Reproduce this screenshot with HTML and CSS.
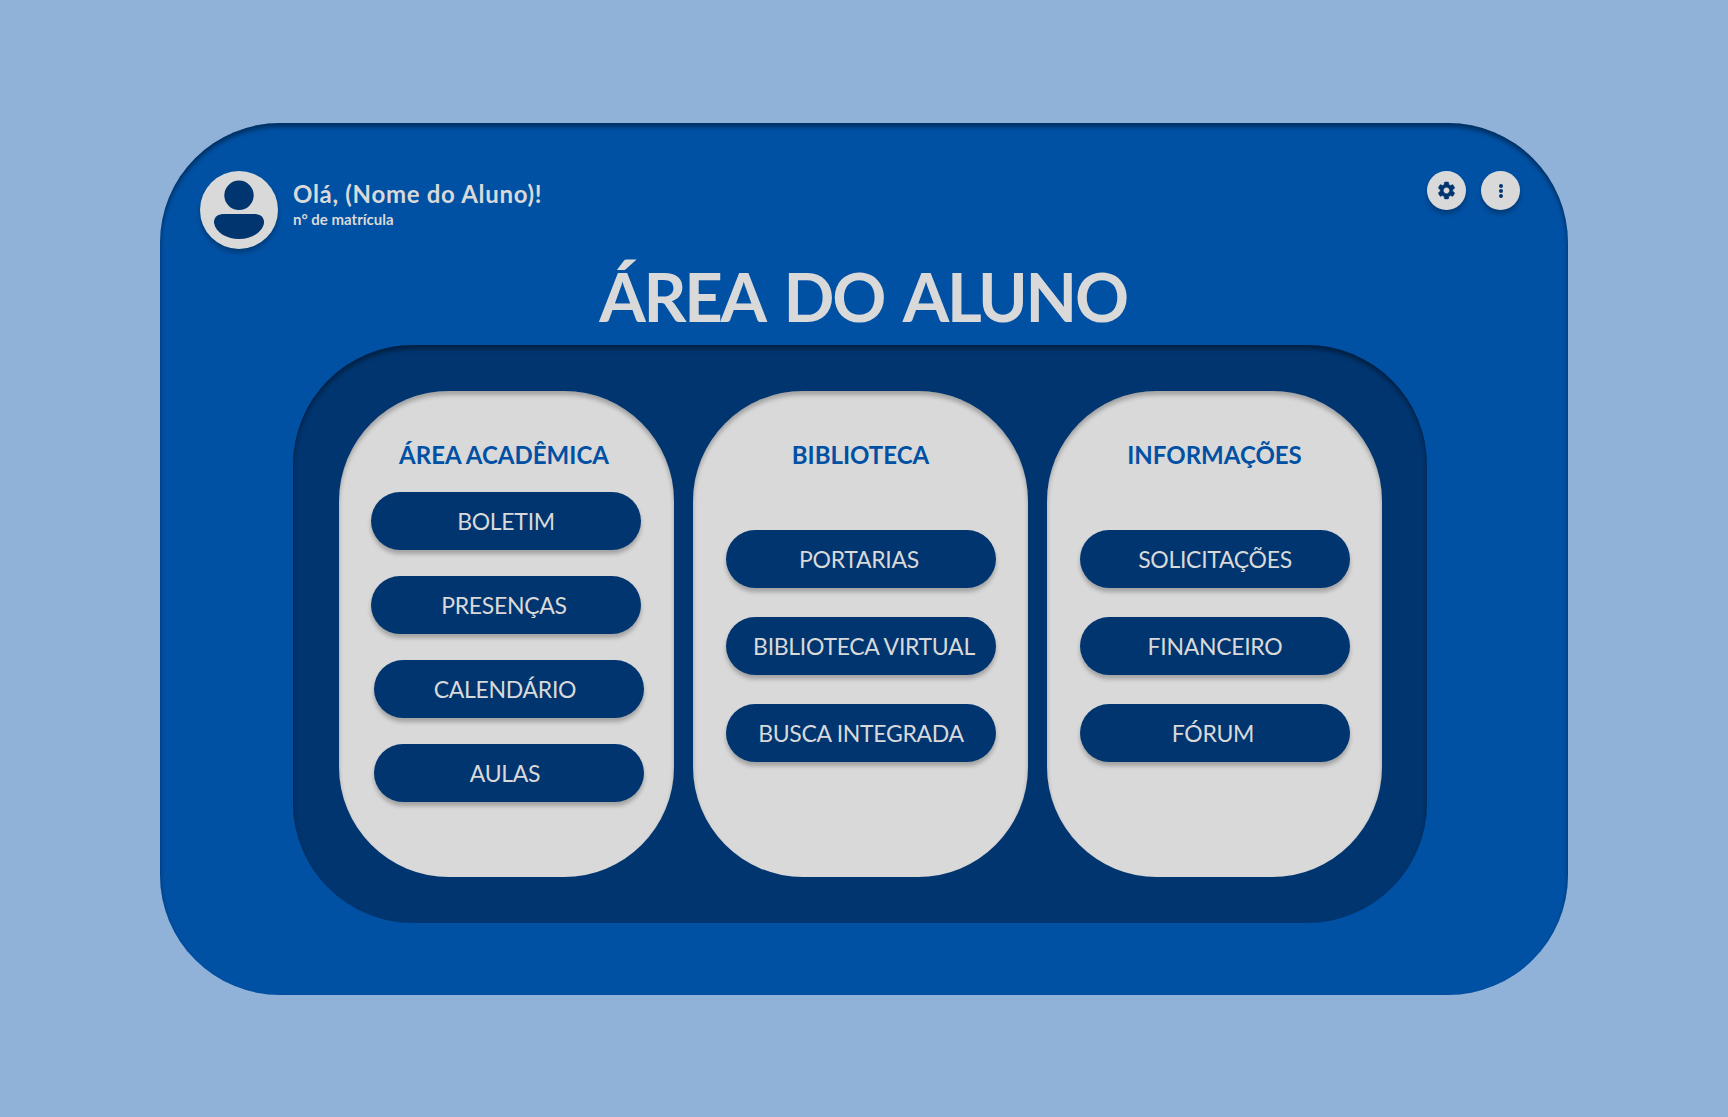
FILE: index.html
```html
<!DOCTYPE html>
<html lang="pt-BR">
<head>
    <meta charset="UTF-8">
    <meta name="viewport" content="width=device-width, initial-scale=1.0">
    <title>Área do Aluno</title>
    <link rel="stylesheet" href="styles.css">
</head>
<body>
    <main class="panel">
        <header class="top-bar">
            <div class="user">
                <svg class="avatar" viewBox="0 0 78 78" aria-hidden="true">
                    <circle cx="39" cy="24.3" r="14.7" fill="#00356f"/>
                    <path d="M23 43h32c5.500 0 9.500 4 9 9-1.500 9-12 16-25 16s-23.500-7-25-16c-.5-5 3.500-9 9-9z" fill="#00356f"/>
                </svg>
                <div class="user-text">
                    <p class="user-name">Olá, (Nome do Aluno)!</p>
                    <p class="user-id">n° de matrícula</p>
                </div>
            </div>
            <div class="actions">
                <button class="round-button" type="button" aria-label="Configurações">
                    <svg class="gear" viewBox="0 0 24 24" aria-hidden="true">
                        <path d="M19.14 12.94c.04-.3.06-.61.06-.94 0-.32-.02-.64-.07-.94l2.03-1.58c.18-.14.23-.41.12-.61l-1.92-3.32c-.12-.22-.37-.29-.59-.22l-2.39.96c-.5-.38-1.03-.7-1.62-.94l-.36-2.54c-.04-.24-.24-.41-.48-.41h-3.84c-.24 0-.43.17-.47.41l-.36 2.54c-.59.24-1.13.57-1.62.94l-2.39-.96c-.22-.08-.47 0-.59.22L2.74 8.87c-.12.21-.08.47.12.61l2.03 1.58c-.05.3-.09.63-.09.94s.02.64.07.94l-2.03 1.58c-.18.14-.23.41-.12.61l1.92 3.32c.12.22.37.29.59.22l2.39-.96c.5.38 1.03.7 1.62.94l.36 2.54c.05.24.24.41.48.41h3.84c.24 0 .44-.17.47-.41l.36-2.54c.59-.24 1.13-.56 1.62-.94l2.39.96c.22.08.47 0 .59-.22l1.92-3.32c.12-.22.07-.47-.12-.61l-2.01-1.58zM12 15.6c-1.98 0-3.6-1.62-3.6-3.6s1.62-3.6 3.6-3.6 3.6 1.62 3.6 3.6-1.62 3.6-3.6 3.6z"/>
                    </svg>
                </button>
                <button class="round-button" type="button" aria-label="Mais opções">
                    <span class="dots"><i></i><i></i><i></i></span>
                </button>
            </div>
        </header>

        <h1 class="page-title">ÁREA DO ALUNO</h1>

        <section class="board">
            <div class="column">
                <h2 class="column-title shift-title">ÁREA ACADÊMICA</h2>
                <div class="menu menu-first">
                    <button class="menu-button" type="button">BOLETIM</button>
                    <button class="menu-button text-left-2" type="button">PRESENÇAS</button>
                    <button class="menu-button menu-button-right text-left-4" type="button">CALENDÁRIO</button>
                    <button class="menu-button menu-button-right text-left-4" type="button">AULAS</button>
                </div>
            </div>
            <div class="column">
                <h2 class="column-title">BIBLIOTECA</h2>
                <div class="menu">
                    <button class="menu-button text-left-2" type="button">PORTARIAS</button>
                    <button class="menu-button text-right-3" type="button">BIBLIOTECA VIRTUAL</button>
                    <button class="menu-button" type="button">BUSCA INTEGRADA</button>
                </div>
            </div>
            <div class="column">
                <h2 class="column-title">INFORMAÇÕES</h2>
                <div class="menu">
                    <button class="menu-button" type="button">SOLICITAÇÕES</button>
                    <button class="menu-button" type="button">FINANCEIRO</button>
                    <button class="menu-button text-left-2" type="button">FÓRUM</button>
                </div>
            </div>
        </section>
    </main>
</body>
</html>
```

FILE: styles.css
```css
* {
    box-sizing: border-box;
}

body {
    margin: 0;
    height: 100vh;
    padding-top: 1px;
    display: flex;
    align-items: center;
    justify-content: center;
    background-color: #90b2d9;
    font-family: Lato, "Open Sans", sans-serif;
    color: #d9d9d9;
}

p,
h1,
h2 {
    margin: 0;
}

.panel {
    width: 1408px;
    height: 872px;
    padding: 48px 48px 0 40px;
    background-color: #0050a3;
    border-radius: 120px;
    box-shadow: inset 0 4px 4px rgba(0, 0, 0, 0.4);
}

.top-bar {
    display: flex;
    justify-content: space-between;
    align-items: flex-start;
    height: 78px;
}

.user {
    display: flex;
    gap: 15px;
}

.avatar {
    width: 78px;
    height: 78px;
    background-color: #d9d9d9;
    border-radius: 50%;
    box-shadow: 0 4px 4px rgba(0, 0, 0, 0.25);
}

.user-text {
    padding-top: 8px;
}

.user-name {
    font-size: 24px;
    font-weight: 700;
    line-height: 30px;
    letter-spacing: 0.7px;
}

.user-id {
    font-size: 15px;
    font-weight: 700;
    line-height: 20px;
}

.actions {
    display: flex;
    gap: 15px;
}

.round-button {
    width: 39px;
    height: 39px;
    padding: 0;
    display: flex;
    align-items: center;
    justify-content: center;
    background-color: #d9d9d9;
    border: none;
    border-radius: 50%;
    box-shadow: 0 4px 4px rgba(0, 0, 0, 0.25);
}

.gear {
    width: 21px;
    height: 21px;
    fill: #00356f;
    stroke: #00356f;
    stroke-width: 0.6;
}

.dots {
    display: flex;
    flex-direction: column;
    gap: 1px;
}

.dots i {
    width: 4px;
    height: 4px;
    background-color: #00356f;
    border-radius: 50%;
}

.page-title {
    height: 96px;
    padding-left: 6px;
    font-size: 67px;
    font-weight: 700;
    line-height: 94px;
    letter-spacing: -2.3px;
    word-spacing: 7px;
    text-align: center;
}

.board {
    display: grid;
    grid-template-columns: repeat(3, 335px);
    gap: 19px;
    width: 1134px;
    height: 578px;
    margin: 0 auto;
    padding: 46px 45px 46px 46px;
    background-color: #00356f;
    border-radius: 120px;
    box-shadow: inset 0 4px 4px rgba(0, 0, 0, 0.4);
}

.column {
    height: 486px;
    padding-top: 44px;
    background-color: #d9d9d9;
    border-radius: 110px;
    box-shadow: inset 0 4px 4px rgba(0, 0, 0, 0.25);
}

.column-title {
    font-size: 24px;
    font-weight: 700;
    line-height: 40px;
    text-align: center;
    color: #0050a3;
}

.shift-title {
    padding-right: 5px;
}

.menu {
    display: flex;
    flex-direction: column;
    gap: 29px;
    margin-top: 55px;
    padding-left: 33px;
}

.menu-first {
    gap: 26px;
    margin-top: 17px;
    padding-left: 32px;
}

.menu-button {
    width: 270px;
    height: 58px;
    background-color: #00356f;
    color: #d9d9d9;
    border: none;
    border-radius: 29px;
    box-shadow: 0 4px 4px rgba(0, 0, 0, 0.25);
    font-family: inherit;
    font-size: 23px;
    font-weight: 400;
    letter-spacing: -0.3px;
}

.menu-button-right {
    margin-left: 3px;
}

.text-left-2 {
    padding-right: 10px;
}

.text-left-4 {
    padding-right: 14px;
}

.text-right-3 {
    padding-left: 12px;
}
```
